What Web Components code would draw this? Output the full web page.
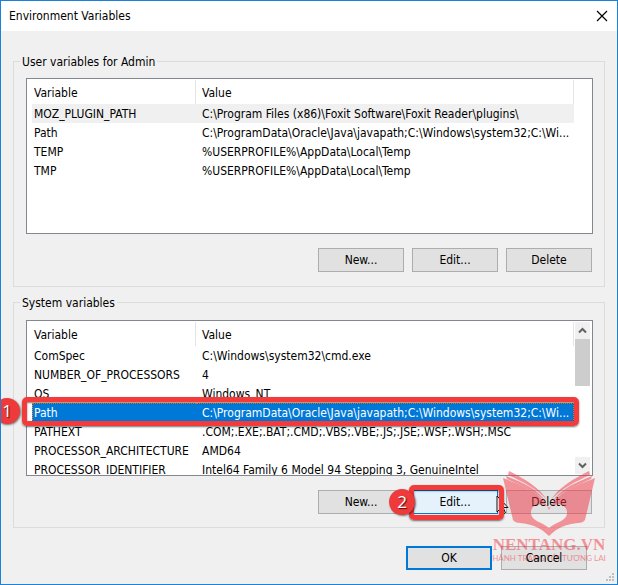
<!DOCTYPE html>
<html lang="en">
<head>
<meta charset="utf-8">
<title>Environment Variables</title>
<style>
html, body { margin: 0; min-height: 100%; }
body { font: 12px/19px "DejaVu Sans Condensed", "Noto Sans", sans-serif; color: #000; background: #efefef; }
</style>
</head>
<body>
<env-dialog></env-dialog>
<script>
const lists = {
  user: [
    ['MOZ_PLUGIN_PATH', 'C:\\Program Files (x86)\\Foxit Software\\Foxit Reader\\plugins\\', 'muted'],
    ['Path', 'C:\\ProgramData\\Oracle\\Java\\javapath;C:\\Windows\\system32;C:\\Wi...'],
    ['TEMP', '%USERPROFILE%\\AppData\\Local\\Temp'],
    ['TMP', '%USERPROFILE%\\AppData\\Local\\Temp']
  ],
  system: [
    ['ComSpec', 'C:\\Windows\\system32\\cmd.exe'],
    ['NUMBER_OF_PROCESSORS', '4'],
    ['OS', 'Windows_NT'],
    ['Path', 'C:\\ProgramData\\Oracle\\Java\\javapath;C:\\Windows\\system32;C:\\Wi...', 'selected'],
    ['PATHEXT', '.COM;.EXE;.BAT;.CMD;.VBS;.VBE;.JS;.JSE;.WSF;.WSH;.MSC'],
    ['PROCESSOR_ARCHITECTURE', 'AMD64'],
    ['PROCESSOR_IDENTIFIER', 'Intel64 Family 6 Model 94 Stepping 3, GenuineIntel']
  ]
};

const define = (name, html, setup) => {
  const template = document.createElement('template');
  template.innerHTML = html;
  customElements.define(name, class extends HTMLElement {
    constructor() {
      super();
      this.attachShadow({ mode: 'open' }).append(template.content.cloneNode(true));
    }
    connectedCallback() { if (setup) setup(this, this.shadowRoot); }
  });
};

/* Push button */
define('win-button', `
<style>
:host { display: block; width: 86px; height: 24px; }
button { display: block; width: 100%; height: 100%; box-sizing: border-box; padding: 0; font: inherit; color: inherit; background: #e1e1e1; border: 1px solid #adadad; }
:host([kind=hot]) button { background: #e5f1fb; border-color: #0078d7; }
:host([kind=default]) button { border: 2px solid #0078d7; }
:host([kind=raised]) span { position: relative; z-index: 5; }
</style>
<button type="button"><span><slot></slot></span></button>`);

/* Titled group */
define('group-box', `
<style>
:host { display: block; }
fieldset { margin: 0; min-width: 0; border: 1px solid #dcdcdc; padding: 7px 11px 14px 12px; }
legend { padding: 2px 2px 0; margin-left: -6px; line-height: 17px; }
.actions { display: flex; justify-content: flex-end; gap: 8px; margin-top: 14px; padding-right: 1px; }
:host([low]) fieldset { padding-top: 8px; padding-bottom: 13px; }
</style>
<fieldset><legend></legend><slot></slot><div class="actions"><slot name="actions"></slot></div></fieldset>`,
(el, root) => { root.querySelector('legend').textContent = el.getAttribute('label'); });

/* Vertical scrollbar */
define('scroll-bar', `
<style>
:host { display: flex; flex-direction: column; width: 15px; }
button { display: block; border: 0; padding: 0; height: 17px; background: #f0f0f0; }
svg { display: block; margin: auto; }
.track { flex: 1; }
.thumb { height: 47px; background: #cdcdcd; }
</style>
<button type="button" aria-label="Scroll up"><svg width="9" height="7" viewBox="0 0 9 7"><path d="M1 5.500 4.500 2 8 5.500" fill="none" stroke="#606060" stroke-width="2"/></svg></button>
<div class="track"><div class="thumb"></div></div>
<button type="button" aria-label="Scroll down"><svg width="9" height="7" viewBox="0 0 9 7"><path d="M1 1.500 4.500 5 8 1.500" fill="none" stroke="#606060" stroke-width="2"/></svg></button>`);

/* Two-column list of variables */
define('var-list', `
<style>
:host { display: block; position: relative; }
.frame { display: flex; height: 154px; overflow: hidden; border: 1px solid #828790; background: #fff; }
.pane { flex: 1; min-width: 0; padding: 1px 0 0 5px; overflow: hidden; }
table { width: 100%; border-collapse: separate; border-spacing: 0; table-layout: fixed; }
.name { width: 164px; }
th, td { box-sizing: border-box; padding: 2px 2px 0; height: 19px; line-height: 17px; text-align: left; font-weight: 400; white-space: nowrap; overflow: hidden; }
th { height: 24px; border-right: 1px solid #e5e5e5; }
th + th, td + td { padding-left: 6px; padding-right: 0; }
tr.muted td { background: #f0f0f0; }
tr.selected td { background: #0078d7; color: #fff; border: 0 dotted #ff8728; border-width: 1px 0; line-height: 15px; }
tr.selected td:first-child { border-left-width: 1px; padding-left: 1px; }
tr.selected td:last-child { border-right-width: 1px; }
.side { width: 18px; padding: 1px 2px 1px 1px; box-sizing: border-box; display: flex; }
scroll-bar { flex: 1; }
</style>
<div class="frame"><div class="pane"><table>
<colgroup><col class="name"><col></colgroup>
<thead><tr><th scope="col">Variable</th><th scope="col">Value</th></tr></thead><tbody></tbody></table></div>
<div class="side"></div></div>
<slot></slot>`,
(el, root) => {
  const body = root.querySelector('tbody');
  for (const [name, value, state] of lists[el.getAttribute('source')]) {
    const row = body.insertRow();
    if (state) row.className = state;
    row.insertCell().textContent = name;
    row.insertCell().textContent = value;
  }
  if (el.hasAttribute('scroll')) root.querySelector('.side').append(document.createElement('scroll-bar'));
});

/* Red outline with a numbered disc at its left */
define('step-mark', `
<style>
:host { display: block; position: absolute; z-index: 3; pointer-events: none; }
.ring { position: absolute; inset: 0; border: 5px solid #f43b3b; border-radius: 5px; box-shadow: 0 1px 2px rgba(0,0,0,.55), inset 0 1px 2px rgba(0,0,0,.5); }
.disc { position: absolute; left: var(--disc, -28px); top: 50%; margin-top: -14px; width: 26px; height: 26px; border-radius: 50%; background: #ee3a3a; color: #fff; font: 17px/26px "Open Sans", sans-serif; text-align: center; box-shadow: 1px 1px 2px rgba(0,0,0,.5); text-shadow: 1px 1px 1px rgba(0,0,0,.7); }
</style>
<div class="ring"></div><div class="disc"><slot></slot></div>`);

/* Site watermark */
define('book-mark', `
<style>
:host { display: block; position: absolute; z-index: 4; right: 10px; bottom: 21px; width: 116px; opacity: .5; color: #f23645; pointer-events: none; text-align: center; }
svg { display: block; margin: 0 auto; }
b { display: block; font: 700 17px/18px "Liberation Serif", serif; white-space: nowrap; }
small { display: block; font: 8px/9px Lato, sans-serif; white-space: nowrap; }
</style>
<svg width="94" height="65" viewBox="0 0 94 65" fill="currentColor">
<path d="M1 7C12 12 37 18 46 37Q47 40 48 37C57 18 82 12 93 7L83 49Q81 52 76 52C65 53 56 56 47 65C38 56 29 53 18 52Q13 52 11 49ZM47 37C42 31 28 32 29 43C30 50 40 51 47 57C54 51 64 50 65 43C66 32 52 31 47 37Z" fill-rule="evenodd"/>
<path d="M4 5C19 11 35 17 44 31C34 20 20 15 5 8ZM7 0C23 8 38 17 45 29C34 17 21 11 6 4ZM90 5C75 11 59 17 50 31C60 20 74 15 89 8ZM87 0C71 8 56 17 49 29C60 17 73 11 88 4Z"/>
</svg>
<b>NENTANG.VN</b><small>HÀNH TRANG TỚI TƯƠNG LAI</small>`);

define('env-dialog', `
<style>
:host { display: flex; flex-direction: column; position: relative; min-height: 100vh; box-sizing: border-box; overflow: hidden; border: 1px solid #1a82d9; background: #f0f0f0; }
header { display: flex; justify-content: space-between; align-items: center; height: 30px; padding: 0 9px 0 8px; box-sizing: border-box; background: #fff; }
h1 { margin: 0; font: inherit; }
.close { border: 0; padding: 0; background: none; width: 12px; height: 12px; }
.close svg { display: block; }
main { display: grid; gap: 6px; padding: 21px 12px 0; }
footer { display: flex; justify-content: flex-end; gap: 9px; padding: 18px 30px 14px 0; }
.edit { position: relative; }
.edit .pointer { position: absolute; z-index: 2; left: 84px; top: 5px; }
.path { left: -4px; right: 14px; top: 77px; height: 29px; --disc: -28px; }
.edit step-mark { left: -3px; right: -6px; top: -5px; height: 35px; --disc: -20px; }
.grip { position: absolute; right: 3px; bottom: 3px; }
</style>
<header><h1>Environment Variables</h1>
<button class="close" type="button" aria-label="Close"><svg width="12" height="12" viewBox="0 0 12 12"><path d="M1 1 11 11M11 1 1 11" stroke="#000" stroke-width="1.200"/></svg></button></header>
<main>
<group-box label="User variables for Admin">
<var-list source="user"></var-list>
<win-button slot="actions">New...</win-button><win-button slot="actions">Edit...</win-button><win-button slot="actions">Delete</win-button>
</group-box>
<group-box label="System variables" low>
<var-list source="system" scroll><step-mark class="path">1</step-mark></var-list>
<win-button slot="actions">New...</win-button>
<div class="edit" slot="actions"><win-button kind="hot">Edit...</win-button>
<svg class="pointer" width="13" height="20" viewBox="0 0 13 20"><path d="M1 1V17L4.500 13.500 7 19 9.500 18 7 12.500H12Z" fill="#fff" stroke="#111"/></svg>
<step-mark>2</step-mark></div>
<win-button slot="actions">Delete</win-button>
</group-box>
</main>
<footer><win-button kind="default">OK</win-button><win-button kind="raised">Cancel</win-button></footer>
<book-mark></book-mark>
<svg class="grip" width="8" height="8" viewBox="0 0 8 8" fill="#bfbfbf"><path d="M6 0h2v2H6zM3 3h2v2H3zM6 3h2v2H6zM0 6h2v2H0zM3 6h2v2H3zM6 6h2v2H6z"/></svg>`);
</script>
</body>
</html>
